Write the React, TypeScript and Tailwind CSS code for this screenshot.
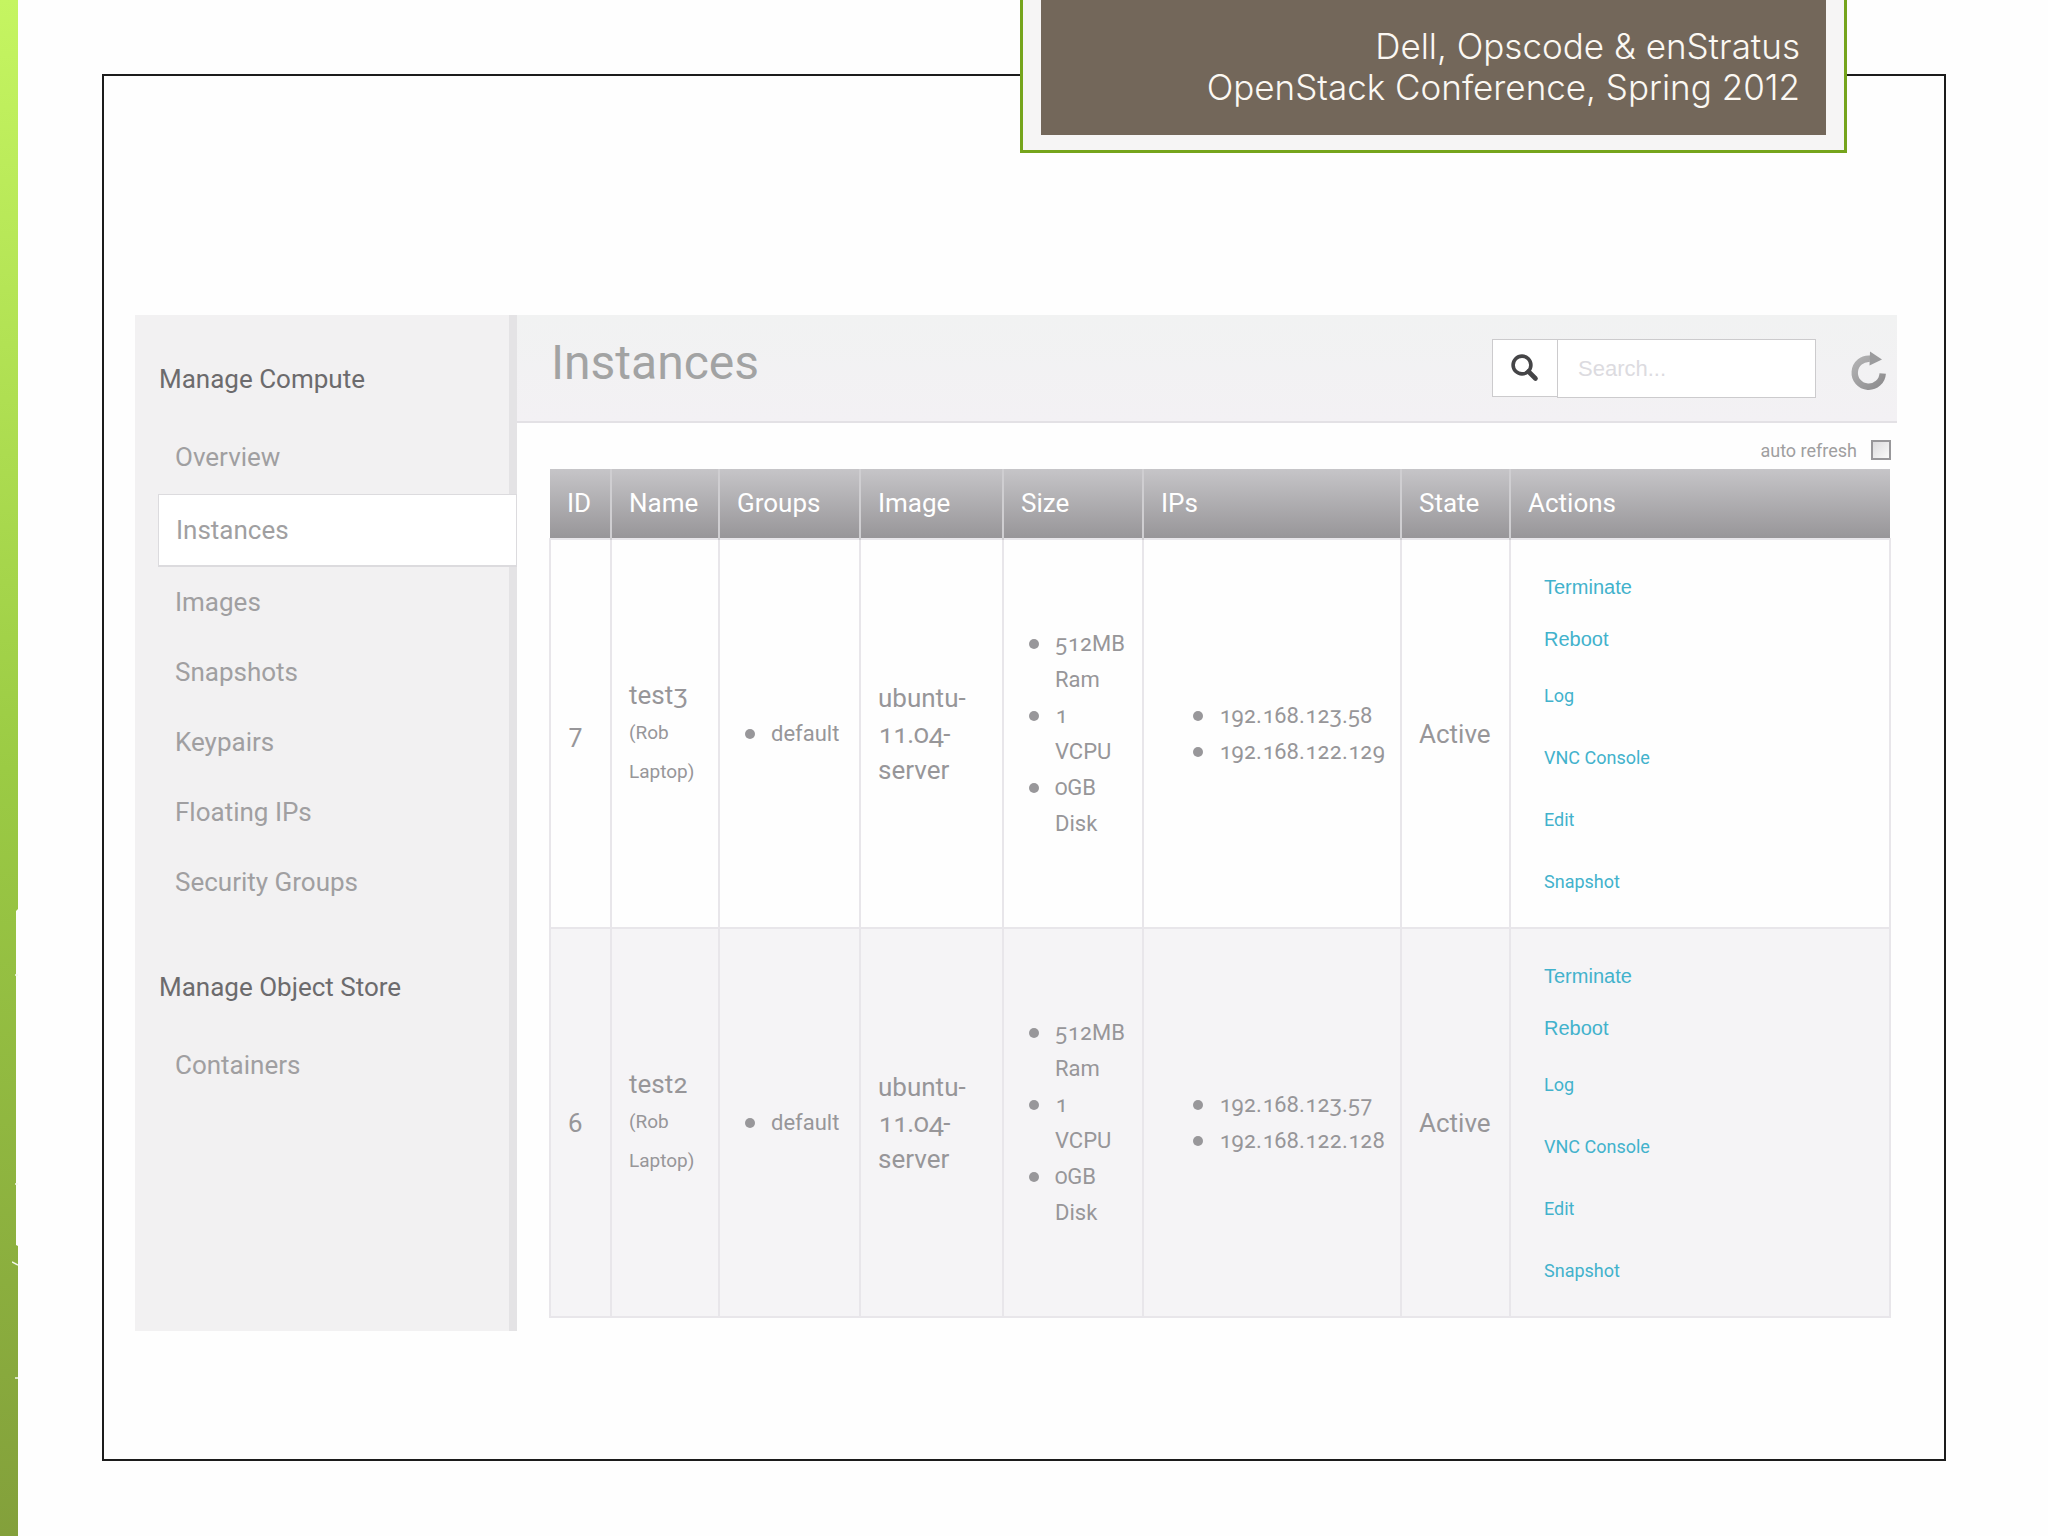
import clsx from "clsx";

const computeLinks = [
  "Overview",
  "Instances",
  "Images",
  "Snapshots",
  "Keypairs",
  "Floating IPs",
  "Security Groups",
];

const objectStoreLinks = ["Containers"];

const columns = [
  { label: "ID", width: "w-[61px]" },
  { label: "Name", width: "w-[108px]" },
  { label: "Groups", width: "w-[141px]" },
  { label: "Image", width: "w-[143px]" },
  { label: "Size", width: "w-[140px]" },
  { label: "IPs", width: "w-[258px]" },
  { label: "State", width: "w-[109px]" },
  { label: "Actions", width: "w-auto" },
];

const instances = [
  {
    id: 7,
    name: "test3",
    owner: "(Rob Laptop)",
    groups: ["default"],
    image: "ubuntu-11.04-server",
    size: ["512MB Ram", "1 VCPU", "0GB Disk"],
    ips: ["192.168.123.58", "192.168.122.129"],
    state: "Active",
  },
  {
    id: 6,
    name: "test2",
    owner: "(Rob Laptop)",
    groups: ["default"],
    image: "ubuntu-11.04-server",
    size: ["512MB Ram", "1 VCPU", "0GB Disk"],
    ips: ["192.168.123.57", "192.168.122.128"],
    state: "Active",
  },
];

function SearchIcon() {
  return (
    <svg width="28" height="28" viewBox="0 0 28 28" fill="none" stroke="#454547">
      <circle cx="11" cy="11" r="8.9" strokeWidth="3.6" />
      <path d="M17.5 17.5 L24.5 24.5" strokeWidth="4.6" strokeLinecap="round" />
    </svg>
  );
}

function RefreshIcon() {
  return (
    <svg width="36" height="40" viewBox="0 0 36 40" fill="none">
      <defs>
        <linearGradient id="refresh" x1="0" y1="0" x2="1" y2="1">
          <stop offset="0" stopColor="#b2b2b3" />
          <stop offset="1" stopColor="#8d8c8e" />
        </linearGradient>
      </defs>
      <path
        d="M19 7.8 A14 14 0 1 0 31.7 22.5"
        stroke="url(#refresh)"
        strokeWidth="6.4"
      />
      <path d="M19 0.5 L31 8.5 L18.5 14.5 Z" fill="#9b9b9d" />
    </svg>
  );
}

function SideStrip() {
  return (
    <div className="relative w-[18px] shrink-0 bg-linear-to-b from-[#c5f561] via-[#9bcb44] to-[#83a03b]">
      <svg
        className="absolute right-0 top-[908px]"
        width="6"
        height="472"
        viewBox="0 0 6 472"
      >
        <path d="M6 1 L4 3 V337 L6 338 Z" fill="#fefefe" />
        <path d="M3 67 H6 M3 276 H6 M3 470 H6" stroke="#f4f9ea" strokeWidth="1.5" />
        <path d="M0 354 L6 357" stroke="#f4f9ea" strokeWidth="1.5" />
      </svg>
    </div>
  );
}

function Banner() {
  return (
    <div className="absolute top-0 right-[201px] w-[827px] border-[3px] border-t-0 border-[#75a41c] bg-[#f6f5f5] px-[18px] pb-[15px]">
      <p className="h-[135px] bg-[#73675a] pt-[26px] pr-[26px] text-right font-['Inter',sans-serif] text-[35px] font-light leading-[41px] text-[#fbf8f3]">
        Dell, Opscode &amp; enStratus
        <br />
        OpenStack Conference, Spring 2012
      </p>
    </div>
  );
}

function NavSection({ title, links }: { title: string; links: string[] }) {
  return (
    <section>
      <h2 className="mb-[25px] pl-6 text-[26px] leading-9 text-[#6c6b6d]">{title}</h2>
      <ul>
        {links.map((link) => (
          <li key={link}>
            {link === "Instances" ? (
              <a
                href="#"
                className="relative z-10 mt-[2px] -mr-2 ml-[23px] flex h-[73px] items-center border border-b-2 border-[#dcdbde] bg-white pl-[17px]"
              >
                {link}
              </a>
            ) : (
              <a href="#" className="flex h-[70px] items-center pl-10">
                {link}
              </a>
            )}
          </li>
        ))}
      </ul>
    </section>
  );
}

function Sidebar() {
  return (
    <nav className="flex w-[382px] shrink-0 flex-col gap-[52px] border-r-8 border-[#e4e3e5] bg-[#f2f1f2] pt-[46px] text-[26px] text-[#a09fa1]">
      <NavSection title="Manage Compute" links={computeLinks} />
      <NavSection title="Manage Object Store" links={objectStoreLinks} />
    </nav>
  );
}

function BulletList({ items }: { items: string[] }) {
  return (
    <ul className="text-[22px] leading-9">
      {items.map((item) => (
        <li key={item} className="flex gap-4">
          <span className="mt-[13px] size-[10px] shrink-0 rounded-full bg-[#98979a]" />
          <span>{item}</span>
        </li>
      ))}
    </ul>
  );
}

function Actions() {
  return (
    <div className="flex flex-col items-start pt-[21px] pb-[14px] pl-4 text-[18px] text-[#42b2cc]">
      <button className="h-[52px] font-['Liberation_Sans',sans-serif] text-[20px]">
        Terminate
      </button>
      <button className="h-[52px] font-['Liberation_Sans',sans-serif] text-[20px]">
        Reboot
      </button>
      {["Log", "VNC Console", "Edit", "Snapshot"].map((action) => (
        <a key={action} href="#" className="flex h-[62px] items-center">
          {action}
        </a>
      ))}
    </div>
  );
}

function InstancesTable() {
  return (
    <table className="w-full table-fixed border-collapse text-[26px] leading-9 text-[#979699]">
      <thead>
        <tr className="h-[70px] bg-linear-to-b from-[#c6c5c8] to-[#979598] text-left text-white">
          {columns.map((column, i) => (
            <th
              key={column.label}
              className={clsx(
                "pb-[2px] pl-[17px] font-normal",
                column.width,
                i > 0 && "border-l-2 border-[#cfced1]"
              )}
            >
              {column.label}
            </th>
          ))}
        </tr>
      </thead>
      <tbody className="oldstyle-nums">
        {instances.map((instance) => (
          <tr
            key={instance.id}
            className="border-2 border-[#e8e6ea] even:bg-[#f5f4f6] *:border-l-2 *:border-[#e8e6ea] *:pl-[17px]"
          >
            <td>{instance.id}</td>
            <td>
              {instance.name}
              <p className="w-[70px] text-[19px] leading-[39px]">{instance.owner}</p>
            </td>
            <td>
              <div className="pl-2">
                <BulletList items={instance.groups} />
              </div>
            </td>
            <td className="pr-5">{instance.image}</td>
            <td>
              <div className="w-[100px] pl-2">
                <BulletList items={instance.size} />
              </div>
            </td>
            <td>
              <div className="pl-8">
                <BulletList items={instance.ips} />
              </div>
            </td>
            <td>{instance.state}</td>
            <td>
              <Actions />
            </td>
          </tr>
        ))}
      </tbody>
    </table>
  );
}

export default function App() {
  return (
    <div className="flex min-h-screen bg-[#fefefe] font-['Roboto',sans-serif]">
      <SideStrip />
      <main className="relative flex flex-1 pt-[74px] pr-[102px] pb-[75px] pl-[84px]">
        <div className="flex-1 border-2 border-[#1c1c1c] pt-[239px] pr-[47px] pl-[31px]">
          <div className="flex min-h-[1016px]">
            <Sidebar />
            <div className="flex-1">
              <header className="flex h-[108px] items-start border-b-2 border-[#e3e1e5] bg-linear-to-b from-[#f1f2f2] to-[#f3f1f4] pr-[10px] pl-[34px]">
                <h1 className="flex-1 pt-[18px] text-[48px] leading-[60px] text-[#a2a3a3]">
                  Instances
                </h1>
                <form className="flex items-start pt-6" role="search">
                  <button
                    type="button"
                    aria-label="Search"
                    className="flex h-[58px] w-[65px] items-center justify-center border border-r-0 border-[#cccbcd] bg-white"
                  >
                    <SearchIcon />
                  </button>
                  <input
                    type="text"
                    aria-label="Search instances"
                    placeholder="Search..."
                    className="h-[59px] w-[259px] border border-[#cccbcd] bg-white px-5 font-['Liberation_Sans',sans-serif] text-[22px] placeholder:text-[#dcdbe0]"
                  />
                </form>
                <button aria-label="Refresh" className="mt-9 ml-[35px]">
                  <RefreshIcon />
                </button>
              </header>
              <div className="pr-[6px] pl-8">
                <label className="flex h-[46px] items-center justify-end gap-[14px] pt-[8px] text-[18px] text-[#9f9ea0]">
                  auto refresh
                  <input
                    type="checkbox"
                    className="size-5 appearance-none border-2 border-[#98979a] bg-linear-to-br from-[#dcdbdd] to-[#fafafa]"
                  />
                </label>
                <InstancesTable />
              </div>
            </div>
          </div>
        </div>
        <Banner />
      </main>
    </div>
  );
}
